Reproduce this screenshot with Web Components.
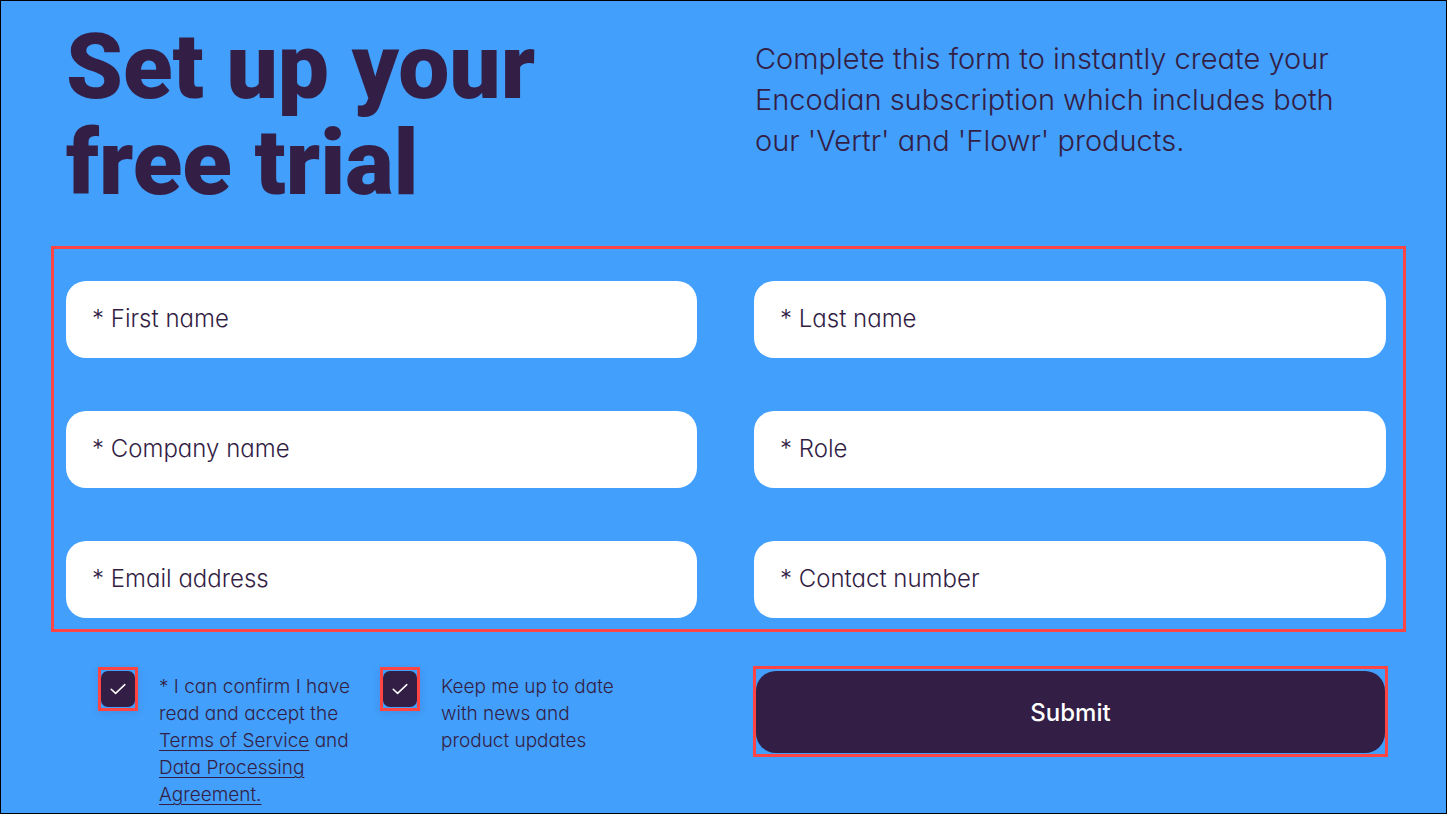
<!DOCTYPE html>
<html lang="en">
<head>
<meta charset="utf-8">
<meta name="viewport" content="width=device-width, initial-scale=1">
<title>Set up your free trial</title>
<style>
  body {
    margin: 0;
    --blue: #429ffc;
    --ink: #331e45;
    --mark: #ff4444;
    --columns: 631fr 632fr;
    background: var(--blue);
    color: var(--ink);
    font-family: Inter, "Open Sans", sans-serif;
    font-feature-settings: "cv11";
    font-weight: 300;
  }
</style>
</head>
<body>
<trial-page></trial-page>
<script>
  function define(name, html, setup) {
    const template = document.createElement("template");
    template.innerHTML = html;
    customElements.define(name, class extends HTMLElement {
      constructor() {
        super();
        this.attachShadow({ mode: "open" }).append(template.content.cloneNode(true));
      }
      connectedCallback() {
        if (setup) setup(this, this.shadowRoot);
      }
    });
  }

  define("trial-intro", `
    <style>
      :host { display: grid; grid-template-columns: var(--columns); column-gap: 57px; }
      h1 { margin: 0; max-width: 520px; font: 900 91px/96px Roboto, sans-serif; }
      p { margin: 19px 0 0; padding-left: 1px; max-width: 600px; font-size: 29px; line-height: 41px; }
    </style>
    <h1><slot name="title"></slot></h1>
    <p><slot></slot></p>
  `);

  define("text-field", `
    <style>
      :host { display: block; min-width: 0; }
      input {
        display: block; box-sizing: border-box; width: 100%; height: 77px;
        padding: 0 26px 2px; border: 0; border-radius: 20px; background: #fff;
        color: inherit; font: inherit; font-size: 24px; font-feature-settings: inherit;
      }
      input::placeholder { color: inherit; opacity: 1; }
    </style>
    <input>
  `, (host, root) => {
    const input = root.querySelector("input");
    const label = host.getAttribute("label");
    input.type = host.getAttribute("type") || "text";
    input.placeholder = "* " + label;
    input.setAttribute("aria-label", label);
    input.required = true;
  });

  define("field-frame", `
    <style>
      :host {
        display: grid; grid-template-columns: var(--columns); gap: 53px 57px;
        border: 3px solid var(--mark); padding: 32px 17px 11px 12px;
      }
    </style>
    <slot></slot>
  `);

  define("consent-box", `
    <style>
      :host { display: block; }
      label { display: flex; align-items: flex-start; gap: 21px; }
      .frame {
        display: grid; flex: none; box-sizing: border-box; width: 40px; height: 44px;
        border: 3px solid var(--mark); padding: 1px 0; box-shadow: 0 2px 8px rgba(51, 30, 69, .12);
      }
      input, svg { grid-area: 1 / 1; }
      input { appearance: none; margin: 0; border-radius: 7px; }
      input:checked { background: var(--ink); }
      svg { place-self: center; visibility: hidden; pointer-events: none; }
      input:checked + svg { visibility: visible; }
      .text { padding-top: 6px; font-size: 19px; line-height: 27px; }
    </style>
    <label>
      <span class="frame">
        <input type="checkbox" checked>
        <svg width="16" height="12" viewBox="0 0 16 12" fill="none" stroke="#fff" stroke-width="1.5" stroke-linecap="round" stroke-linejoin="round" aria-hidden="true">
          <path d="M1.2 6.2 L5.6 10.4 L14.8 1.6"/>
        </svg>
      </span>
      <span class="text"><slot></slot></span>
    </label>
  `);

  define("submit-button", `
    <style>
      :host { display: block; border: 3px solid var(--mark); padding: 2px 0 1px; }
      button {
        display: block; width: 100%; height: 82px; border: 0; border-radius: 20px;
        background: var(--ink); color: #fff; font: inherit; font-size: 24px; font-weight: 500;
        font-feature-settings: inherit;
      }
    </style>
    <button type="submit"><slot></slot></button>
  `);

  define("trial-page", `
    <style>
      :host {
        display: block; box-sizing: border-box; min-height: 100vh;
        border: 1px solid #000; padding: 18px 60px 4px 65px;
      }
      field-frame { margin: 35px -20px 0 -15px; }
      .actions { display: grid; grid-template-columns: var(--columns); column-gap: 57px; align-items: start; margin-top: 34px; }
      .consents { display: grid; grid-template-columns: 261px 261px; column-gap: 21px; padding: 1px 0 0 32px; }
      submit-button { margin: 0 -2px 0 -1px; }
      a { color: inherit; text-underline-offset: 3px; text-decoration-thickness: 1px; }
    </style>
    <trial-intro>
      <span slot="title">Set up your free trial</span>
      Complete this form to instantly create your Encodian subscription which includes both our 'Vertr' and 'Flowr' products.
    </trial-intro>
    <form>
      <field-frame>
        <text-field label="First name"></text-field>
        <text-field label="Last name"></text-field>
        <text-field label="Company name"></text-field>
        <text-field label="Role"></text-field>
        <text-field label="Email address" type="email"></text-field>
        <text-field label="Contact number" type="tel"></text-field>
      </field-frame>
      <div class="actions">
        <div class="consents">
          <consent-box>* I can confirm I have read and accept the <a href="#terms">Terms of Service</a> and <a href="#data">Data Processing Agreement.</a></consent-box>
          <consent-box>Keep me up to date with news and product updates</consent-box>
        </div>
        <submit-button>Submit</submit-button>
      </div>
    </form>
  `);
</script>
</body>
</html>
